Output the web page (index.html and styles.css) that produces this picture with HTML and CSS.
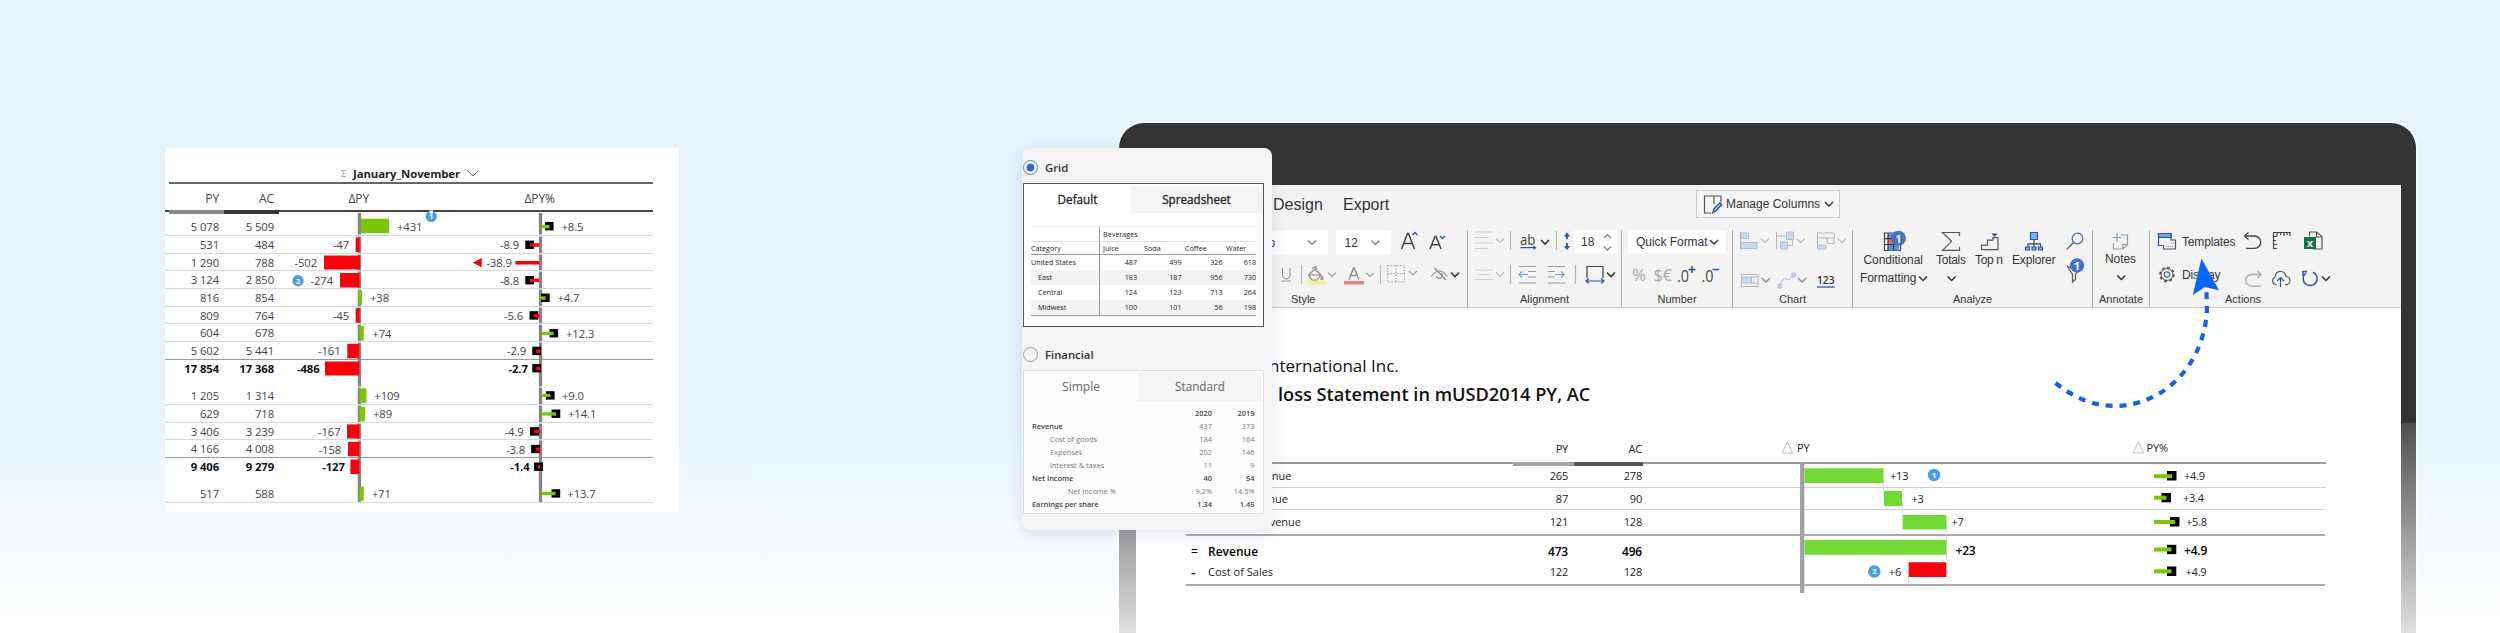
FILE: index.html
```html
<!DOCTYPE html>
<html lang="en">
<head>
<meta charset="utf-8">
<title>Report templates</title>
<link rel="stylesheet" href="styles.css">
</head>
<body>
<svg class="defs" width="0" height="0" aria-hidden="true">
  <defs>
    <path id="chev" d="M-4 -2L0 2L4 -2"/>
    <g id="vr"><path d="M0 -9.500V9.500" stroke="#b4b4b4"/></g>
  </defs>
</svg>
<main class="hero">

  <section class="variance">
    <h2 class="variance-title"><span class="sigma">Σ</span>January_November<svg width="12" height="7" viewBox="-6 -3 12 7"><path d="M-5.500 -2.500L0 3L5.500 -2.500" fill="none" stroke="#777"/></svg></h2>
    <div class="v-head">
      <span class="num">PY</span><span class="num">AC</span>
      <svg class="plot" viewBox="280 184 373 26"><text x="348.500" y="203.400">ΔPY</text><text x="524.500" y="203.400">ΔPY%</text></svg>
    </div>
    <div class="v-scale"><i class="py"></i><i class="ac"></i></div>
    <div class="v-row first"><span class="num">5 078</span><span class="num">5 509</span>
      <svg class="plot" viewBox="280 0 373 21"><circle cx="431.200" cy="3.500" r="5.600" class="badge"/><path d="M429.500 -2.500h3.500v3h-3.500z" fill="#fff"/><text x="431.200" y="6" class="badge-t">1</text><path class="ax" d="M359.400 0V21.500M540.500 0V21.500"/><path class="up" d="M360.700 5.700h28.300v14.500h-28.300z"/><text x="397" y="17.500">+431</text><path d="M545 9h8.600v8.400h-8.600z"/><path class="up" d="M541 12h8.500v3.400h-8.500z"/><text x="561.500" y="17.500">+8.5</text></svg></div>
    <div class="v-row"><span class="num">531</span><span class="num">484</span>
      <svg class="plot" viewBox="280 0 373 18"><path class="ax" d="M359.400 0.500V17M540.500 0.500V17"/><path class="dn" d="M355.600 1.500h4v14.500h-4z"/><text class="e" x="349" y="13">-47</text><path d="M525.300 4.600h8.700v8.400h-8.700z"/><path class="dn" d="M530 7.300h9v3.400h-9z"/><text class="e" x="519" y="13">-8.9</text></svg></div>
    <div class="v-row s"><span class="num">1 290</span><span class="num">788</span>
      <svg class="plot" viewBox="280 0 373 17"><path class="ax" d="M359.400 0.500V16M540.500 0.500V16"/><path class="dn" d="M324 1.500h36v14h-36z"/><text class="e" x="317" y="12.800">-502</text><path class="dn" d="M515.400 7h24v3.400h-24zM472.700 8.700l9-4.600v9.200z"/><text class="e" x="511.800" y="12.800">-38.9</text></svg></div>
    <div class="v-row"><span class="num">3 124</span><span class="num">2 850</span>
      <svg class="plot" viewBox="280 0 373 18"><circle cx="298" cy="9.700" r="5.700" class="badge"/><text x="298" y="12.500" class="badge-t">2</text><path class="ax" d="M359.400 0.500V17M540.500 0.500V17"/><path class="dn" d="M340 2h19.500v14.500h-19.500z"/><text class="e" x="333" y="13.600">-274</text><path d="M525.300 5h8.700v8.400h-8.700z"/><path class="dn" d="M530 7.700h9v3.400h-9z"/><text class="e" x="519" y="13.600">-8.8</text></svg></div>
    <div class="v-row"><span class="num">816</span><span class="num">854</span>
      <svg class="plot" viewBox="280 0 373 18"><path class="ax" d="M359.400 0.500V17M540.500 0.500V17"/><path class="up" d="M358.500 1.500h3.700v14.500h-3.700z"/><text x="370" y="13">+38</text><path d="M541 4.600h8.700v8.400h-8.700z"/><path class="up" d="M540 7.300h5.700v3.400h-5.700z"/><text x="557.500" y="13">+4.7</text></svg></div>
    <div class="v-row s"><span class="num">809</span><span class="num">764</span>
      <svg class="plot" viewBox="280 0 373 17"><path class="ax" d="M359.400 0.500V16M540.500 0.500V16"/><path class="dn" d="M355.600 1.200h4v14.500h-4z"/><text class="e" x="349" y="12.600">-45</text><path d="M529.500 4.200h8.800v8.400h-8.800z"/><path class="dn" d="M534 7h5.500v3.400h-5.500z"/><text class="e" x="523" y="12.600">-5.6</text></svg></div>
    <div class="v-row"><span class="num">604</span><span class="num">678</span>
      <svg class="plot" viewBox="280 0 373 18"><path class="ax" d="M359.400 0.500V17M540.500 0.500V17"/><path class="up" d="M359.500 2h4.300v14.500h-4.300z"/><text x="372.300" y="13.600">+74</text><path d="M549.500 5h8.600v8.400h-8.600z"/><path class="up" d="M541 7.700h12.600v3.400h-12.600z"/><text x="566" y="13.600">+12.3</text></svg></div>
    <div class="v-row strong-line"><span class="num">5 602</span><span class="num">5 441</span>
      <svg class="plot" viewBox="280 0 373 18"><path class="ax" d="M359.400 0.500V18M540.500 0.500V18"/><path class="dn" d="M347.300 1.800h12v14.500h-12z"/><text class="e" x="340.500" y="13.400">-161</text><path d="M532.300 4.700h8.800v8.400h-8.800z"/><path class="dn" d="M536.300 7.500h4v3.400h-4z"/><text class="e" x="526" y="13.400">-2.9</text></svg></div>
    <div class="v-row total"><span class="num">17 854</span><span class="num">17 368</span>
      <svg class="plot" viewBox="280 0 373 27"><path class="ax" d="M359.400 0V26.500M540.500 0V26.500"/><path class="dn" d="M325 1.500h34.300v14h-34.300z"/><text class="e" x="319.600" y="13">-486</text><path d="M532.300 4h8.800v8.400h-8.800z"/><path class="dn" d="M536.300 6.800h4v3.400h-4z"/><text class="e" x="527.800" y="13">-2.7</text></svg></div>
    <div class="v-row"><span class="num">1 205</span><span class="num">1 314</span>
      <svg class="plot" viewBox="280 0 373 18"><path class="ax" d="M359.400 0.500V17M540.500 0.500V17"/><path class="up" d="M359.500 1.300h7v14.500h-7z"/><text x="374.300" y="13">+109</text><path d="M546 4.200h8.600v8.400h-8.600z"/><path class="up" d="M541 6.800h9.500v3.400h-9.500z"/><text x="562" y="13">+9.0</text></svg></div>
    <div class="v-row"><span class="num">629</span><span class="num">718</span>
      <svg class="plot" viewBox="280 0 373 18"><path class="ax" d="M359.400 0.500V17M540.500 0.500V17"/><path class="up" d="M359.500 1.800h5.500v14.500h-5.500z"/><text x="373" y="13.400">+89</text><path d="M551.500 4.500h8.800v8.400h-8.800z"/><path class="up" d="M541 7.200h15v3.400h-15z"/><text x="568" y="13.400">+14.1</text></svg></div>
    <div class="v-row s"><span class="num">3 406</span><span class="num">3 239</span>
      <svg class="plot" viewBox="280 0 373 17"><path class="ax" d="M359.400 0.500V16M540.500 0.500V16"/><path class="dn" d="M347 1.400h12.400v14.200h-12.400z"/><text class="e" x="340.500" y="13">-167</text><path d="M530 4.200h9v8.400h-9z"/><path class="dn" d="M534 6.900h6.300v3.400h-6.300z"/><text class="e" x="523.600" y="13">-4.9</text></svg></div>
    <div class="v-row strong-line"><span class="num">4 166</span><span class="num">4 008</span>
      <svg class="plot" viewBox="280 0 373 18"><path class="ax" d="M359.400 0.500V18M540.500 0.500V18"/><path class="dn" d="M348 2h11.400v14.300h-11.400z"/><text class="e" x="341.200" y="13.600">-158</text><path d="M531.200 4.800h8.800v8.400h-8.800z"/><path class="dn" d="M535.700 7.500h4.800v3.400h-4.800z"/><text class="e" x="525" y="13.600">-3.8</text></svg></div>
    <div class="v-row total"><span class="num">9 406</span><span class="num">9 279</span>
      <svg class="plot" viewBox="280 0 373 27"><path class="ax" d="M359.400 0V27M540.500 0V27"/><path class="dn" d="M350.400 1.500h9v14.500h-9z"/><text class="e" x="344.800" y="13.400">-127</text><path d="M534 4.500h9v8.400h-9z"/><path class="dn" d="M538 7h2v3.400h-2z"/><text class="e" x="529.600" y="13.400">-1.4</text></svg></div>
    <div class="v-row"><span class="num">517</span><span class="num">588</span>
      <svg class="plot" viewBox="280 0 373 18"><path class="ax" d="M359.400 0V17M540.500 0V17"/><path class="up" d="M359.500 1.500h4.300v14.300h-4.300z"/><text x="371.700" y="12.800">+71</text><path d="M551.500 4.200h8.700v8.400h-8.700z"/><path class="up" d="M541 6.800h14.600v3.400h-14.600z"/><text x="567.300" y="12.800">+13.7</text></svg></div>
  </section>

  <section class="device">
    <div class="screen">
      <header class="ribbon">
        <nav class="tabs">
          <span class="tab">Design</span><span class="tab">Export</span>
          <button class="manage"><svg width="20" height="20" viewBox="1702 193 20 20" fill="none"><path d="M1711 212h-6.500v-17h16.500v6M1714 195v8" stroke="#555" stroke-width="1.200"/><path d="M1713 211.500l1-3.500 6-6.200 1.500 1.800-6 6.500z" stroke="#2b53a8" stroke-width="1.500"/></svg>Manage Columns<svg width="10" height="6" viewBox="-5 -3 10 6"><use href="#chev" fill="none" stroke="#333" stroke-width="1.400"/></svg></button>
        </nav>
        <div class="groups">
          <div class="group g-style">
            <svg width="331" height="61" viewBox="1136 230 331 61" fill="none" stroke-width="1.200">
              <path d="M1150 230.700h178v23.700h-178zM1336 230.700h55v23.700h-55z" fill="#fff"/>
              <text x="1268.500" y="246.500" class="r">o</text><use href="#chev" x="1312" y="242.500" stroke="#777"/>
              <text x="1344.500" y="246.500" class="r">12</text><use href="#chev" x="1375.500" y="242.500" stroke="#777"/>
              <path d="M1401.500 249l6-15.500h1l6 15.500M1403.500 243.500h9M1430 249l5-12.500h1l5 12.500M1431.800 244.800h7.500" stroke="#444" stroke-width="1.500"/>
              <path d="M1412.500 235l2.500-2.500 2.500 2.500M1440 236l2.500 2.500 2.500-2.500" stroke="#2b53a8" stroke-width="1.300"/>
              <path d="M1282.500 268v7a3.800 3.800 0 0 0 7.600 0v-7M1281.500 281h9.500" stroke="#999"/>
              <use href="#vr" x="1301.500" y="274.500"/><use href="#vr" x="1380.500" y="274.500"/>
              <path d="M1307 280.500h19.500v4h-19.500z" fill="#f3f196"/><path d="M1308.500 275l6.500-6 6 6-4 5h-5zM1312 268.500l4-2v5M1309 275h11" stroke="#888"/><path d="M1322 275q3.500 5 0 5t0-5z" fill="#999"/>
              <use href="#chev" x="1332" y="274.700" stroke="#999"/>
              <path d="M1344 281h20v3.500h-20z" fill="#e8857d"/><path d="M1349 279.500l4.500-11.500h.8l4.500 11.500M1350.500 275.500h7" stroke="#888" stroke-width="1.300"/>
              <use href="#chev" x="1370" y="274.700" stroke="#999"/>
              <path d="M1387.500 265.500h17v16.500h-17zM1396 265.500v16.500M1387.500 273.700h17" stroke="#aaa" stroke-dasharray="1.500 1.500"/>
              <use href="#chev" x="1413" y="273" stroke="#999"/>
              <path d="M1431 276.500q8.500-11 16.500 0M1434.500 268l11.500 12M1436.500 276a3 3 0 1 0 5-2.800" stroke="#888"/>
              <use href="#chev" x="1455" y="274.500" stroke="#333" stroke-width="1.600"/>
            </svg>
            <span class="cap">Style</span>
          </div>
          <div class="group g-align">
            <svg width="153" height="61" viewBox="1468 230 153 61" fill="none" stroke-width="1.200">
              <path d="M1475 232h18M1475 237.500h13M1475 243h18M1475 248.500h13M1475 270h18M1477 274.500h14M1475 279.500h18" stroke="#ccc"/>
              <use href="#chev" x="1500" y="240.500" stroke="#bbb"/><use href="#chev" x="1500" y="274.500" stroke="#bbb"/>
              <use href="#vr" x="1510.500" y="240.500"/><use href="#vr" x="1510.500" y="274.500"/><use href="#vr" x="1556.500" y="240.500"/><use href="#vr" x="1575.500" y="274.500"/>
              <text x="1520" y="244.500" class="seg ab" textLength="15.500" lengthAdjust="spacingAndGlyphs">ab</text><path d="M1520.500 247.700h15M1533.500 246l2 1.700-2 1.700" stroke="#2b53a8"/>
              <use href="#chev" x="1545" y="242" stroke="#333" stroke-width="1.600"/>
              <path d="M1567 233v6M1567 243v6" stroke="#2b53a8" stroke-width="1.800"/><path d="M1563.800 236.500l3.200-4 3.200 4zM1563.800 246l3.200 4 3.200-4z" fill="#2b53a8"/>
              <path d="M1574 230.700h43v22.500h-43z" fill="#fff"/><text x="1581" y="246" class="r">18</text>
              <path d="M1604 238l3.500-3.500 3.500 3.500M1604 246.500l3.500 3.500 3.500-3.500" stroke="#777"/>
              <path d="M1519 266.500h17M1528 271.500h8M1528 277h8M1519 283h17M1548 266.500h17M1548 271.500h7M1548 277h7M1548 283h17" stroke="#999"/>
              <path d="M1528 274.500h-9M1522 271.500l-3 3 3 3M1555 274.500h9M1561 271.500l3 3-3 3" stroke="#7a9bd2"/>
              <path d="M1587 278v-11.500h16v11.500" stroke="#444"/><path d="M1586 281h18M1588.800 278.500l-2.800 2.500 2.800 2.500M1601.200 278.500l2.800 2.500-2.800 2.500" stroke="#2b53a8"/>
              <use href="#chev" x="1611" y="274.500" stroke="#333" stroke-width="1.600"/>
            </svg>
            <span class="cap">Alignment</span>
          </div>
          <div class="group g-number">
            <svg width="110" height="61" viewBox="1622 230 110 61" fill="none">
              <path d="M1628 230.700h98v22.500h-98z" fill="#fff"/><text x="1636" y="246" class="r" textLength="71.500">Quick Format</text>
              <use href="#chev" x="1714" y="242" stroke="#333" stroke-width="1.500"/>
              <text x="1632" y="281" class="seg pale" textLength="14" lengthAdjust="spacingAndGlyphs">%</text><text x="1653.500" y="281" class="seg pale" textLength="18.500" lengthAdjust="spacingAndGlyphs">$€</text>
              <text x="1677" y="281.500" class="seg" textLength="12" lengthAdjust="spacingAndGlyphs">.0</text><text x="1701.500" y="281.500" class="seg" textLength="12" lengthAdjust="spacingAndGlyphs">.0</text>
              <path d="M1688.500 269.500h7M1692 266v7M1712.500 269.500h6.500" stroke="#2b53a8" stroke-width="1.500"/>
            </svg>
            <span class="cap">Number</span>
          </div>
          <div class="group g-chart">
            <svg width="119" height="61" viewBox="1733 230 119 61" fill="none">
              <g fill="#c9daf0" stroke="#a9bedf"><path d="M1741 233h7.500v5.500h-7.500zM1741 242.500h16v6h-16zM1786.500 232h7v7.500h-7zM1780.500 242h7v7h-7zM1817.500 245h8.500v4h-8.500zM1741.500 277h10v6h-10zM1792 273h3.500v4h-3.500zM1778 284.500h3.500v3.500h-3.500z"/></g>
              <path d="M1740.500 231.500v18M1776.500 232v17M1776.500 236h10M1787.500 245.500h5v-6M1817.500 249v-16h17v5h-17M1827 238v5.500h7v-5.500M1741.500 274.500h16.500v12h-16.500zM1751.500 277h6.500M1751.500 283h6.500M1780 284.500l4-6.500 5 2 4-5" stroke="#b5b5b5"/>
              <g stroke="#bbb" stroke-width="1.300"><use href="#chev" x="1765" y="240.500"/><use href="#chev" x="1800.500" y="240.500"/><use href="#chev" x="1842" y="240.500"/></g>
              <g stroke="#888" stroke-width="1.300"><use href="#chev" x="1766" y="280"/><use href="#chev" x="1802" y="280"/></g>
              <text x="1817" y="283.500" class="n123" textLength="17.500" lengthAdjust="spacingAndGlyphs">123</text><path d="M1817 287h17.500" stroke="#2b53a8" stroke-width="1.300"/>
            </svg>
            <span class="cap">Chart</span>
          </div>
          <div class="group g-analyze">
            <svg width="239" height="61" viewBox="1853 230 239 61" fill="none" stroke-width="1.200">
              <path d="M1884.500 233h16v17.500h-16z" fill="#fff" stroke="#444"/><path d="M1888 233h5v5.500h-5zM1888 244.500h11v6h-11z" fill="#5c93e0"/><path d="M1888 239h5v5.500h-5z" fill="#e86a62"/><path d="M1884.500 238.700h16M1884.500 244.500h16M1888 233v17.500M1893.500 233v17.500" stroke="#335"/>
              <circle cx="1898.500" cy="238.300" r="7.500" fill="#4472c4"/><text x="1898.500" y="242.500" class="dot">1</text>
              <text x="1863.500" y="264" class="r" textLength="59.500">Conditional</text><text x="1860" y="282" class="r" textLength="56.500">Formatting</text><use href="#chev" x="1923" y="278.500" stroke="#333" stroke-width="1.500"/>
              <path d="M1959.500 236v-3.500h-17l9 8.800-9 9h17v-3.500" stroke="#555"/><text x="1936" y="264" class="r" textLength="30">Totals</text><use href="#chev" x="1951.700" y="278.500" stroke="#333" stroke-width="1.500"/>
              <path d="M1981.500 249.700v-4.500h6v-5h5.500v-2.500h5v12z" stroke="#555"/><path d="M1991.500 233.500h6l-3 3.500z" fill="#2b53a8"/><text x="1975" y="264" class="r" textLength="28">Top n</text>
              <path d="M2034 240v7M2028 247v-3.200h12.500v3.200" stroke="#444"/><path d="M2030.500 232.500h7v7h-7zM2025.500 247h4v3h-4zM2032 247h4v3h-4zM2038.500 247h4v3h-4z" fill="#7fb0ea" stroke="#2b53a8"/><text x="2012" y="264" class="r" textLength="43.500">Explorer</text>
              <circle cx="2077.500" cy="238.500" r="5.300" stroke="#4a6db0"/><path d="M2073.500 242.500l-7 7.200" stroke="#555"/>
              <path d="M2067.500 266.500q7 2.500 12.500 0l-4.500 8v5l-3 2.500v-7.500z" stroke="#555"/><circle cx="2077" cy="265.500" r="7.200" fill="#4472c4"/><text x="2077" y="269.700" class="dot">1</text>
            </svg>
            <span class="cap">Analyze</span>
          </div>
          <div class="group g-annotate">
            <svg width="56" height="61" viewBox="2093 230 56 61" fill="none" stroke-width="1.200">
              <path d="M2121 235h6.500v9.500l-4.500 4.500h-9.500v-6M2127.500 244.500h-4.500v4.500" stroke="#999"/><path d="M2112.500 237.500h9M2117 233v9" stroke="#7a9bd2"/>
              <text x="2105" y="263" class="r" textLength="31">Notes</text><use href="#chev" x="2121.300" y="277.500" stroke="#333" stroke-width="1.500"/>
            </svg>
            <span class="cap">Annotate</span>
          </div>
          <div class="group g-actions">
            <svg width="250" height="61" viewBox="2150 230 250 61" fill="none" stroke-width="1.200">
              <path d="M2158.500 233.500h12.500v12h-12.500z" stroke="#2b53a8"/><path d="M2158.500 233.500h12.500v4h-12.500z" fill="#6da3e8" stroke="#2b53a8"/><path d="M2163.500 240.500h12v9h-12z" fill="#f3f3f3"/><path d="M2163.500 245.500v3.500h12v-9h-4" stroke="#555" /><path d="M2166 246.500h8M2171 243h3" stroke="#7a9bd2" stroke-dasharray="1 1"/>
              <text x="2182" y="246" class="r" textLength="53.500">Templates</text>
              <path d="M2248.500 232.500l-4 3.500 4 3.500M2244.500 236h10a6.200 6.200 0 0 1 0 12.400h-8.500" stroke="#444" stroke-width="1.400"/>
              <path d="M2290 236v-3.500h-16.500v16h3.500M2277 233v3M2280.500 233v2M2284 233v3M2287 233v2M2274 236.500h3M2274 240.500h2M2274 244.500h3" stroke="#444"/>
              <path d="M2309.500 236.500v-4.500h7l5.500 4.500v12.500h-9M2316.500 232v5h5" stroke="#555"/><path d="M2304 237h12v12h-12z" fill="#1e7145"/><text x="2310" y="246.500" class="xl">x</text>
              <circle cx="2167" cy="274.500" r="6.800" stroke="#555" stroke-width="2" stroke-dasharray="2.700 2.640"/><circle cx="2167" cy="274.500" r="5.900" stroke="#555" stroke-width="1"/><circle cx="2167" cy="274.500" r="2.700" stroke="#4472c4"/>
              <text x="2182" y="279" class="r" textLength="38.500">Display</text>
              <path d="M2257.500 271l3.500 3.500-3.500 3.500M2261 274.500h-9.500a5.800 5.800 0 0 0 0 11.600h9.500" stroke="#aaa" stroke-width="1.300"/>
              <path d="M2276.500 284.500h-1a4 4 0 0 1-.5-7.500q1-6 6-5.500 4.500.5 5 5a4 4 0 0 1 0 8h-1" stroke="#555"/><path d="M2280.500 287v-9M2277 281l3.500-3.500 3.500 3.500" stroke="#2b53a8"/>
              <path d="M2306 273a7 7 0 1 0 7-.8M2303 276v-4.500h4" stroke="#2b53a8" stroke-width="1.500"/><use href="#chev" x="2326" y="278.500" stroke="#333" stroke-width="1.500"/>
            </svg>
            <span class="cap">Actions</span>
          </div>
        </div>
      </header>

      <div class="report">
        <p class="company">nternational Inc.</p>
        <h1 class="statement">loss Statement in mUSD2014 PY, AC</h1>
        <div class="r-head"><span class="num">PY</span><span class="num">AC</span>
          <svg class="rplot" viewBox="1642 440 683 22"><path d="M1782 453l5.300-11 5.300 11zM2133 453l5.500-11 5.300 11z" fill="none" stroke="#bbb"/><text x="1797" y="451.700">PY</text><text x="2146.500" y="451.700" textLength="21.500">PY%</text></svg></div>
        <div class="r-scale"><i class="py"></i><i class="ac"></i></div>
        <div class="r-row h1"><span class="lead l1">enue</span><span class="num">265</span><span class="num">278</span>
          <svg class="rplot" viewBox="1642 464 683 23"><path class="rax" d="M1802.200 462v26"/><path class="hair" d="M1883.500 480v8"/><path class="lime" d="M1804.500 468.300h79v14.700h-79z"/><text x="1890" y="480">+13</text><circle cx="1934" cy="475" r="6.200" class="badge"/><text x="1934" y="477.700" class="badge-t">1</text><path d="M2167 471h9.500v9.500h-9.500z"/><path class="up" d="M2154 474.200h18v4h-18z"/><text x="2184" y="480">+4.9</text></svg></div>
        <div class="r-row h2"><span class="lead l2">nue</span><span class="num">87</span><span class="num">90</span>
          <svg class="rplot" viewBox="1642 488 683 21"><path class="rax" d="M1802.200 488v22"/><path class="hair" d="M1883.500 488v4M1902.500 500v10"/><path class="lime" d="M1884 491h18v15h-18z"/><text x="1911.500" y="503">+3</text><path d="M2161.500 493h9.500v9.300h-9.500z"/><path class="up" d="M2154 495.700h12.500v4h-12.500z"/><text x="2183" y="502">+3.4</text></svg></div>
        <div class="r-row h3"><span class="lead l3">venue</span><span class="num">121</span><span class="num">128</span>
          <svg class="rplot" viewBox="1642 510 683 24"><path class="rax" d="M1802.200 510v25"/><path class="hair" d="M1902.500 510v5M1946.500 520v15"/><path class="lime" d="M1902.500 515h43.800v14.500h-43.800z"/><text x="1951.500" y="526.300">+7</text><path d="M2170 517h9.500v9.500h-9.500z"/><path class="up" d="M2154 520h21v4h-21z"/><text x="2186" y="526.300">+5.8</text></svg></div>
        <div class="r-row h4 bold"><span class="sign">=</span><span class="name">Revenue</span><span class="num">473</span><span class="num">496</span>
          <svg class="rplot" viewBox="1642 536 683 24"><path class="rax" d="M1802.200 536v24"/><path class="hair" d="M1946.500 536v24"/><path class="lime" d="M1804.500 540h142v14.700h-142z"/><text x="1955.500" y="555">+23</text><path d="M2167 544.800h9.300v9.300h-9.300z"/><path class="up" d="M2154 547.500h17.500v4h-17.500z"/><text x="2184" y="555">+4.9</text></svg></div>
        <div class="r-row h5"><span class="sign minus">-</span><span class="name">Cost of Sales</span><span class="num">122</span><span class="num">128</span>
          <svg class="rplot" viewBox="1642 560 683 24"><path class="rax" d="M1802.200 560v33"/><path class="hair" d="M1908.500 560v24"/><path class="dn" d="M1908.800 562.300h37.500v14.700h-37.500z"/><circle cx="1874.300" cy="571.500" r="6.200" class="badge"/><text x="1874.300" y="574.300" class="badge-t">2</text><text class="e" x="1901" y="576">+6</text><path d="M2167 566.500h9.300v9.500h-9.300z"/><path class="up" d="M2154 569.300h17.500v4h-17.500z"/><text x="2185.500" y="576">+4.9</text></svg></div>
      </div>
    </div>
  </section>

  <aside class="picker">
    <label class="opt"><span class="radio on"></span>Grid</label>
    <div class="card grid-card">
      <div class="seg-tabs"><span class="st st-a">Default</span><span class="st st-b">Spreadsheet</span></div>
      <div class="mini">
        <div class="m-row bev"><span></span><span class="wide">Beverages</span></div>
        <div class="m-row hd"><span>Category</span><span>Juice</span><span>Soda</span><span>Coffee</span><span>Water</span></div>
        <div class="m-row"><span>United States</span><span>487</span><span>499</span><span>326</span><span>618</span></div>
        <div class="m-row in alt"><span>East</span><span>183</span><span>187</span><span>956</span><span>730</span></div>
        <div class="m-row in"><span>Central</span><span>124</span><span>123</span><span>713</span><span>264</span></div>
        <div class="m-row in alt"><span>Midwest</span><span>100</span><span>101</span><span>56</span><span>198</span></div>
      </div>
    </div>
    <label class="opt opt-2"><span class="radio"></span>Financial</label>
    <div class="card fin-card">
      <div class="seg-tabs"><span class="st st-a">Simple</span><span class="st st-b">Standard</span></div>
      <div class="fin">
        <div class="f-row b"><span></span><span>2020</span><span>2019</span></div>
        <div class="f-row"><span class="b">Revenue</span><span>437</span><span>373</span></div>
        <div class="f-row i1"><span>Cost of goods</span><span>184</span><span>164</span></div>
        <div class="f-row i1"><span>Expenses</span><span>202</span><span>146</span></div>
        <div class="f-row i1"><span>Interest &amp; taxes</span><span>11</span><span>9</span></div>
        <div class="f-row b"><span>Net Income</span><span>40</span><span>54</span></div>
        <div class="f-row i2"><span>Net Income %</span><span>9.2%</span><span>14.5%</span></div>
        <div class="f-row b"><span>Earnings per share</span><span>1.34</span><span>1.45</span></div>
      </div>
    </div>
  </aside>

  <svg class="pointer" width="180" height="160" viewBox="2045 255 180 160">
    <path d="M2055.500 383C2073 397 2093 406 2115 406C2170 405 2207.500 357 2207 304L2206.300 289" fill="none" stroke="#1263e0" stroke-width="4.200" stroke-dasharray="7 6.900"/>
    <path d="M2201.500 258.500L2219 290.200L2205 287L2192.700 295z" fill="#0866f8"/>
  </svg>
</main>
</body>
</html>
```
FILE: styles.css
```css
* { box-sizing: border-box; }
body { margin: 0; }
.defs { position: absolute; }
svg { flex: none; display: block; overflow: visible; }

.hero {
  position: relative;
  display: flex;
  align-items: flex-start;
  width: 2500px;
  height: 633px;
  overflow: hidden;
  background: linear-gradient(#e5f3fd 0, #e5f3fd 420px, #f1f8ff 505px, #fafdff 585px, #fff 633px);
  font-family: "Open Sans", "Noto Sans", sans-serif;
}

/* variance table */
.variance {
  width: 514px;
  height: 364px;
  margin: 148px 0 0 165px;
  background: #fff;
  color: #444;
  font-size: 11.3px;
  letter-spacing: -0.1px;
}
.variance-title {
  display: flex;
  align-items: center;
  gap: 7px;
  height: 36px;
  margin: 0 26px 0 4px;
  padding: 18px 0 1px 172px;
  border-bottom: 2px solid #666;
  color: #222;
  font-size: 11.4px;
  line-height: 15px;
}
.variance-title .sigma { color: #999; font-size: 9px; font-weight: 400; }
.v-head, .v-row { display: flex; align-items: flex-start; width: 488px; }
.v-head .num, .v-row .num { flex: none; width: 55px; text-align: right; line-height: 18px; white-space: nowrap; }
.v-head .num:first-child, .v-row .num:first-child { width: 54px; }
.v-head .num + .num, .v-row .num + .num { margin-right: 6px; }
.v-head { height: 26px; font-size: 12px; }
.v-head .num { padding-top: 6px; }
.plot { width: 373px; }
.plot text, .rplot text { fill: #444; }
.v-head .plot text { font-size: 12px; }
.v-scale { display: flex; width: 488px; height: 3px; padding-left: 4px; background: linear-gradient(#444, #444) 0 0 / 488px 2px no-repeat; }
.v-scale i { width: 55px; height: 4px; }
.v-scale .py { background: #888; }
.v-scale .ac { background: #333; }
.v-row { height: 18px; border-bottom: 1px solid #d8d8d8; }
.v-row.s { height: 17px; }
.v-row .num { line-height: 17px; }
.v-row.first { height: 23px; }
.v-row.first .num { line-height: 27px; }
.v-row.strong-line { border-bottom-color: #999; }
.v-row.total { height: 27px; border-bottom: 0; font-weight: 700; }
.v-row.total .num, .v-row.total text { color: #111; fill: #111; }
.ax { stroke: #858585; stroke-width: 3.3; }
.up { fill: #7cc60a; }
.dn { fill: #fb000c; }
text.e { text-anchor: end; }
.badge { fill: #4a9fe0; }
.plot .badge-t, .rplot .badge-t { fill: #fff; font-size: 7.5px; font-weight: 700; text-anchor: middle; }

/* device */
.device {
  width: 1297px;
  height: 510px;
  margin: 123px 0 0 440px;
  padding: 62px 15px 0 17px;
  border-radius: 25px 25px 0 0;
  background: linear-gradient(#333 0 300px, #505050 300px, #e0e0e0 510px);
  box-shadow: 0 0 0 2px rgba(255, 255, 255, .6);
}
.screen { height: 448px; background: #fff; }
.ribbon { height: 123px; background: #f3f3f3; border-bottom: 1px solid #ccc; font-family: "Liberation Sans", Arial, sans-serif; color: #333; }
.tabs { display: flex; height: 45px; padding-left: 137px; font-size: 16px; line-height: 40px; }
.tab { width: 70px; }
.manage {
  display: flex;
  align-items: center;
  gap: 4px;
  width: 144px;
  height: 28px;
  margin: 5px 0 0 283px;
  padding: 0 5px;
  border: 1px solid #ccc;
  background: #f5f5f5;
  color: #333;
  font: 12px "Liberation Sans", Arial, sans-serif;
  white-space: nowrap;
}
.groups { display: flex; height: 77px; }
.group { border-right: 1px solid #aaa; }
.g-style { width: 332px; }
.g-align { width: 154px; }
.g-number { width: 111px; }
.g-chart { width: 120px; }
.g-analyze { width: 240px; }
.g-annotate { width: 57px; }
.g-actions { width: 250px; border: 0; }
.cap { display: block; text-align: center; font-size: 11px; line-height: 14px; padding-top: 1px; }
.g-style .cap { text-align: left; padding-left: 155px; }
.g-actions .cap { text-align: left; padding-left: 75px; }
text.r { font-size: 12px; fill: #333; }
text.seg { font-family: "Open Sans", sans-serif; font-size: 16px; fill: #444; }
text.seg.ab { font-size: 14.5px; }
text.pale { fill: #a5a5a5; }
text.n123 { font-family: "Open Sans", sans-serif; font-size: 11.5px; font-weight: 600; fill: #333; }
text.dot { font-family: "Open Sans", sans-serif; font-size: 11px; font-weight: 700; fill: #fff; text-anchor: middle; }
text.xl { font-size: 11px; font-weight: 700; fill: #fff; text-anchor: middle; }

/* report */
.report { color: #222; font-size: 11px; padding-top: 43px; }
.company { margin: 0; padding-left: 133px; color: #111; font-size: 17px; line-height: 29px; }
.statement { margin: 0; padding-left: 142px; color: #111; font-size: 18.2px; font-weight: 600; line-height: 29px; }
.r-head { display: flex; align-items: flex-start; height: 22px; margin-top: 31px; padding-left: 306px; }
.r-head .num { line-height: 17px; }
.report .num { flex: none; width: 74px; text-align: right; letter-spacing: -0.2px; }
.r-head .num:first-child { width: 126px; }
.rplot { width: 683px; letter-spacing: -0.2px; }
.rplot text { fill: #222; }
.r-scale { display: flex; height: 2px; margin: 0 75px 0 50px; padding-left: 327px; background: #999; }
.r-scale i { height: 4px; }
.r-scale .py { width: 61px; background: #a3a3a3; }
.r-scale .ac { width: 69px; background: #555; }
.r-row { display: flex; align-items: flex-start; width: 1139px; margin-left: 50px; border-bottom: 1px solid #ccc; }
.r-row .lead { flex: none; text-align: right; }
.l1 { width: 105.5px; margin-right: 202.5px; }
.l2 { width: 102px; margin-right: 206px; }
.l3 { width: 115px; margin-right: 193px; }
.sign { flex: none; width: 22px; padding-left: 5px; font-weight: 400; }
.minus { font-size: 14px; font-weight: 600; }
.name { flex: none; width: 286px; }
.h1 { height: 24px; line-height: 24px; }
.h2 { height: 22px; line-height: 21px; }
.h3 { height: 26px; line-height: 24px; border-bottom: 2px solid #aaa; }
.h4 { height: 24px; line-height: 31px; border: 0; }
.h5 { height: 26px; line-height: 24px; border-bottom: 2px solid #aaa; }
.bold { font-weight: 600; font-size: 12px; }
.bold, .bold text { color: #000; fill: #000; }
.rax { stroke: #a0a0a0; stroke-width: 4.2; }
.hair { stroke: #ddd; }
.lime { fill: #73d936; }

/* template picker */
.picker {
  position: absolute;
  left: 1022px;
  top: 148px;
  width: 250px;
  height: 382px;
  padding: 10px 8px 0 1px;
  border-radius: 8px;
  background: #f4f4f4;
  box-shadow: 0 4px 14px rgba(60, 90, 170, .16);
  color: #333;
}
.opt { display: flex; align-items: center; gap: 7px; height: 18px; font-size: 11.3px; font-weight: 600; }
.opt-2 { margin-top: 18px; }
.radio { width: 15px; height: 15px; border: 1px solid #999; border-radius: 50%; }
.radio.on { border-color: #4a7fd0; background: radial-gradient(circle, #2b68c8 0 3.5px, #f4f8ff 4.3px); }
.card { height: 144px; margin-top: 7px; border: 1px solid #555; background: #fff; }
.seg-tabs { display: flex; padding: 2px 1px 0 0; font-size: 12px; text-align: center; line-height: 28px; }
.grid-card .st-a { width: 107px; }
.st-b { flex: 1; background: #f4f4f4; }
.grid-card .seg-tabs { color: #222; font-size: 11.7px; -webkit-text-stroke: .3px #222; line-height: 27px; }
.mini { margin: 13px 7px 0; border-bottom: 1px solid #999; font-size: 7.2px; color: #222; }
.m-row { display: grid; grid-template-columns: 69px 37px 44.5px 41px 33.5px; height: 15px; line-height: 14px; }
.m-row span { text-align: right; }
.m-row span:first-child { text-align: left; border-right: 1px solid #999; }
.m-row.bev, .m-row.hd { grid-template-columns: 69px 41px 41px 41px 33px; }
.m-row.bev span, .m-row.hd span { text-align: left; }
.m-row.bev span + span, .m-row.hd span + span { padding-left: 3px; }
.m-row.bev { border-bottom: 1px solid #ddd; border-top: 1px solid #eee; height: 16px; }
.m-row.bev .wide { grid-column: span 4; }
.m-row.hd { border-bottom: 1px solid #999; height: 13px; line-height: 13px; }
.m-row.in span:first-child { padding-left: 7px; }
.m-row.alt { background: #f3f3f3; }
.fin-card { border-color: #ddd; background: #fdfdfd; }
.fin-card .seg-tabs { padding-top: 1px; color: #666; line-height: 29px; }
.fin-card .st-a { width: 114px; }
.fin-card .st-b { font-size: 11.7px; }
.fin { padding: 6px 8px 0; font-size: 7.4px; color: #777; }
.f-row { display: grid; grid-template-columns: 139px 41px 42.5px; height: 13px; line-height: 13px; }
.f-row span { text-align: right; }
.f-row span:first-child { text-align: left; }
.f-row .b, .f-row.b { font-weight: 600; color: #444; }
.f-row.i1 span:first-child { padding-left: 18px; }
.f-row.i2 span:first-child { padding-left: 36px; }

.pointer { position: absolute; left: 2045px; top: 255px; }
```
